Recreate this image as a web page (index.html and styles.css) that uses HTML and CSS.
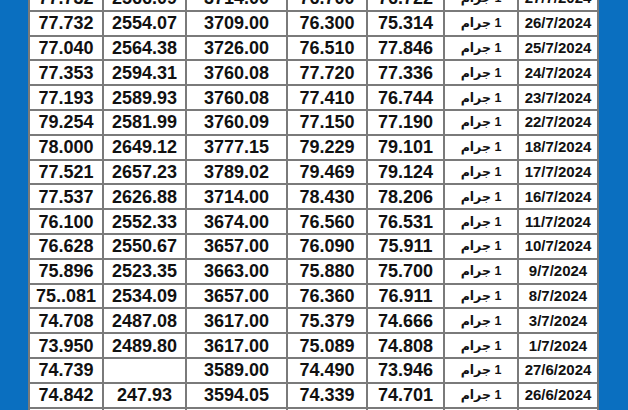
FILE: index.html
```html
<!DOCTYPE html>
<html lang="ar">
<head>
<meta charset="utf-8">
<link rel="stylesheet" href="styles.css">
</head>
<body>
<div class="page">
<table class="prices" dir="ltr">
<colgroup>
<col class="c1"><col class="c2"><col class="c3"><col class="c4"><col class="c5"><col class="c6"><col class="c7">
</colgroup>
<tbody>
<tr><td>77.732</td><td>2566.09</td><td>3714.00</td><td>76.700</td><td>76.722</td><td class="unit" dir="rtl">1 جرام</td><td class="date">27/7/2024</td></tr>
<tr><td>77.732</td><td>2554.07</td><td>3709.00</td><td>76.300</td><td>75.314</td><td class="unit" dir="rtl">1 جرام</td><td class="date">26/7/2024</td></tr>
<tr><td>77.040</td><td>2564.38</td><td>3726.00</td><td>76.510</td><td>77.846</td><td class="unit" dir="rtl">1 جرام</td><td class="date">25/7/2024</td></tr>
<tr><td>77.353</td><td>2594.31</td><td>3760.08</td><td>77.720</td><td>77.336</td><td class="unit" dir="rtl">1 جرام</td><td class="date">24/7/2024</td></tr>
<tr><td>77.193</td><td>2589.93</td><td>3760.08</td><td>77.410</td><td>76.744</td><td class="unit" dir="rtl">1 جرام</td><td class="date">23/7/2024</td></tr>
<tr><td>79.254</td><td>2581.99</td><td>3760.09</td><td>77.150</td><td>77.190</td><td class="unit" dir="rtl">1 جرام</td><td class="date">22/7/2024</td></tr>
<tr><td>78.000</td><td>2649.12</td><td>3777.15</td><td>79.229</td><td>79.101</td><td class="unit" dir="rtl">1 جرام</td><td class="date">18/7/2024</td></tr>
<tr><td>77.521</td><td>2657.23</td><td>3789.02</td><td>79.469</td><td>79.124</td><td class="unit" dir="rtl">1 جرام</td><td class="date">17/7/2024</td></tr>
<tr><td>77.537</td><td>2626.88</td><td>3714.00</td><td>78.430</td><td>78.206</td><td class="unit" dir="rtl">1 جرام</td><td class="date">16/7/2024</td></tr>
<tr><td>76.100</td><td>2552.33</td><td>3674.00</td><td>76.560</td><td>76.531</td><td class="unit" dir="rtl">1 جرام</td><td class="date">11/7/2024</td></tr>
<tr><td>76.628</td><td>2550.67</td><td>3657.00</td><td>76.090</td><td>75.911</td><td class="unit" dir="rtl">1 جرام</td><td class="date">10/7/2024</td></tr>
<tr><td>75.896</td><td>2523.35</td><td>3663.00</td><td>75.880</td><td>75.700</td><td class="unit" dir="rtl">1 جرام</td><td class="date">9/7/2024</td></tr>
<tr><td>75..081</td><td>2534.09</td><td>3657.00</td><td>76.360</td><td>76.911</td><td class="unit" dir="rtl">1 جرام</td><td class="date">8/7/2024</td></tr>
<tr><td>74.708</td><td>2487.08</td><td>3617.00</td><td>75.379</td><td>74.666</td><td class="unit" dir="rtl">1 جرام</td><td class="date">3/7/2024</td></tr>
<tr><td>73.950</td><td>2489.80</td><td>3617.00</td><td>75.089</td><td>74.808</td><td class="unit" dir="rtl">1 جرام</td><td class="date">1/7/2024</td></tr>
<tr><td>74.739</td><td></td><td>3589.00</td><td>74.490</td><td>73.946</td><td class="unit" dir="rtl">1 جرام</td><td class="date">27/6/2024</td></tr>
<tr><td>74.842</td><td>247.93</td><td>3594.05</td><td>74.339</td><td>74.701</td><td class="unit" dir="rtl">1 جرام</td><td class="date">26/6/2024</td></tr>
<tr><td>74.000</td><td>2400.00</td><td>3590.00</td><td>74.300</td><td>74.600</td><td class="unit" dir="rtl">1 جرام</td><td class="date">25/6/2024</td></tr>
</tbody>
</table>
</div>
</body>
</html>
```

FILE: styles.css
```css
html, body {
  margin: 0;
  padding: 0;
  background: #0a6fc0;
  overflow: hidden;
}

.page {
  width: 628px;
  height: 410px;
  overflow: hidden;
  padding-left: 28px;
  box-sizing: border-box;
}

.prices {
  margin-top: -15px;
  border-collapse: collapse;
  table-layout: fixed;
  width: 569px;
  background: #ffffff;
  font-family: "Liberation Sans", Arial, sans-serif;
  font-weight: bold;
  color: #111111;
}

.c1 { width: 74px; }
.c2 { width: 83px; }
.c3 { width: 101px; }
.c4 { width: 80px; }
.c5 { width: 77px; }
.c6 { width: 74px; }
.c7 { width: 80px; }

.prices td {
  border: 2px solid #7a7a7a;
  height: 22.8px;
  padding: 0;
  text-align: center;
  vertical-align: middle;
  font-size: 18px;
  line-height: 20px;
  white-space: nowrap;
  overflow: hidden;
}

.prices td.unit {
  font-size: 12.5px;
  font-weight: bold;
  font-family: "Liberation Sans", "DejaVu Sans", sans-serif;
}

.prices td.date {
  font-size: 15px;
}
```
